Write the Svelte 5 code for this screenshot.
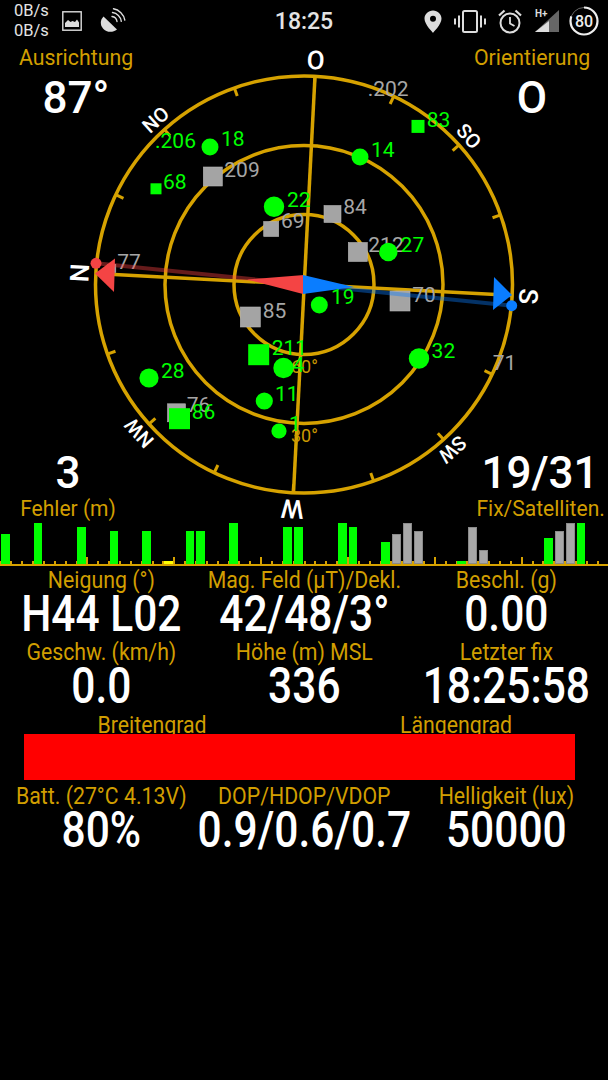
<script>
  const cx = 304;
  const cy = 284.5;
  const tilt = 3;

  const ticks = Array.from({ length: 16 }, (_, i) => tilt + i * 22.5);

  const compass = [
    { t: "N", a: -87, r: 225, fs: 26 },
    { t: "NO", a: -42, r: 222, fs: 20 },
    { t: "O", a: 3, r: 225, fs: 26 },
    { t: "SO", a: 48, r: 222, fs: 20 },
    { t: "S", a: 93, r: 225, fs: 26 },
    { t: "SW", a: 138, r: 222, fs: 20 },
    { t: "W", a: 183, r: 225, fs: 26 },
    { t: "NW", a: 228, r: 222, fs: 20 },
  ];

  // x, y = marker centre, s = square size
  const greySats = [
    { n: "209", x: 212.8, y: 176.5, s: 19, tx: 224.3, ty: 177 },
    { n: "69", x: 271.2, y: 229, s: 15, tx: 281, ty: 228 },
    { n: "84", x: 332.5, y: 214, s: 17, tx: 343.3, ty: 213.5 },
    { n: "212", x: 357.8, y: 252, s: 19, tx: 368.3, ty: 252 },
    { n: "77", x: 111.8, y: 268.5, s: 8, tx: 117.3, ty: 268.5 },
    { n: "85", x: 250.3, y: 317, s: 20, tx: 262.7, ty: 317.5 },
    { n: "76", x: 176.5, y: 412.8, s: 18, tx: 186.7, ty: 412 },
    { n: "70", x: 400, y: 301, s: 20, tx: 412.3, ty: 302 },
    { n: ".202", tx: 367.7, ty: 96 },
    { n: "71", tx: 492.7, ty: 370 },
  ];

  const greenSats = [
    { n: ".206", tx: 155, ty: 147.7 },
    { n: "18", x: 210, y: 147, r: 8.5, tx: 221, ty: 146 },
    { n: "22", x: 274, y: 206.7, r: 10.2, tx: 287, ty: 207 },
    { n: "14", x: 360, y: 157, r: 8.5, tx: 371, ty: 157 },
    { n: "27", x: 388.3, y: 252, r: 9.2, tx: 400.6, ty: 252 },
    { n: "19", x: 319.3, y: 305, r: 8.5, tx: 331, ty: 304 },
    { n: "32", x: 419, y: 358.5, r: 10.2, tx: 431.6, ty: 358 },
    { n: "28", x: 149, y: 378, r: 9.6, tx: 161, ty: 378 },
    { n: "11", x: 264.3, y: 401, r: 8.6, tx: 275, ty: 401 },
    { n: "1", x: 279, y: 431, r: 7.6, tx: 289, ty: 431 },
    { n: "4", x: 283.5, y: 368, r: 10.2, tx: 292.5, ty: 372 },
    { n: "83", x: 418, y: 126.4, s: 13, tx: 426.7, ty: 126.7 },
    { n: "68", x: 156, y: 188.8, s: 11, tx: 163, ty: 189 },
    { n: "211", x: 258.7, y: 354.7, s: 21, tx: 271.7, ty: 355 },
    { n: "86", x: 179.5, y: 418.7, s: 21, tx: 191.7, ty: 419 },
  ];

  const G = "green";
  const A = "grey";
  const Y = "yellow";
  const barData = {
    0: [30, G], 3: [41, G], 7: [37, G], 10: [33, G], 13: [33, G], 15: [3, Y],
    17: [33, G], 18: [33, G], 21: [41, G], 26: [37, G], 27: [37, G], 31: [41, G],
    32: [37, G], 35: [22, G], 36: [30, A], 37: [41, A], 38: [33, A], 42: [3, G],
    43: [37, A], 44: [14, A], 50: [26, G], 51: [33, A], 52: [41, A], 53: [41, G],
  };
  const slots = Array.from({ length: 56 }, (_, i) => barData[i] ?? null);

  const rowA = [
    ["Neigung (°)", "H44 L02"],
    ["Mag. Feld (µT)/Dekl.", "42/48/3°"],
    ["Beschl. (g)", "0.00"],
  ];
  const rowB = [
    ["Geschw. (km/h)", "0.0"],
    ["Höhe (m) MSL", "336"],
    ["Letzter fix", "18:25:58"],
  ];
  const rowC = [
    ["Batt. (27°C 4.13V)", "80%"],
    ["DOP/HDOP/VDOP", "0.9/0.6/0.7"],
    ["Helligkeit (lux)", "50000"],
  ];
</script>

<div class="page">
  <header class="status">
    <div class="status-left">
      <div class="speed"><span>0B/s</span><span>0B/s</span></div>
      <svg class="ic" width="20" height="20" viewBox="0 0 20 20">
        <rect x="0.8" y="0.8" width="18.4" height="18.4" fill="none" stroke="#ddd" stroke-width="1.4" />
        <path d="M3 16V12l3-3 2.5 2 2-1 2.5 1 2-2.5 2 3V16Z" fill="#ddd" />
      </svg>
      <svg class="ic dish" width="28" height="28" viewBox="0 0 28 28">
        <path d="M4.5 9.5 18 22.5C13.5 26 7.5 25.5 4 21.5 1 18 1 13 4.5 9.5Z" fill="#ddd" />
        <g fill="none" stroke="#ddd" stroke-width="1.4" stroke-linecap="round">
          <path d="M13 9.5c2.5.3 4.7 2.5 5 5" />
          <path d="M13.5 5.5c4.5.5 8.3 4.3 8.8 8.8" />
          <path d="M14.5 1.8c5.5.8 10.5 5.700 11.3 11.3" />
        </g>
      </svg>
    </div>
    <div class="clock">18:25</div>
    <div class="status-right">
      <svg width="18" height="23" viewBox="0 0 18 23">
        <path fill-rule="evenodd" d="M9 .5C4.2 .5.5 4.2.5 8.800c0 5.700 8.500 14 8.500 14s8.500-8.300 8.500-14C17.500 4.200 13.800.5 9 .5Zm0 11.300a3 3 0 1 1 0-6 3 3 0 0 1 0 6Z" fill="#ddd" />
      </svg>
      <svg width="32" height="23" viewBox="0 0 32 23">
        <rect x="9" y="1" width="14" height="21" rx="1.500" fill="none" stroke="#ddd" stroke-width="2" />
        <path d="M5 5.500v12M1 8.500v6M27 5.500v12M31 8.500v6" stroke="#ddd" stroke-width="2" />
      </svg>
      <svg width="24" height="25" viewBox="0 0 24 25">
        <circle cx="12" cy="14" r="9.500" fill="none" stroke="#ddd" stroke-width="2" />
        <path d="M12 8v6.500l4.500 2.500" fill="none" stroke="#ddd" stroke-width="1.800" />
        <path d="M1 6.500 6.500 1.500M23 6.500 17.500 1.500" stroke="#ddd" stroke-width="2.200" />
      </svg>
      <svg class="signal" width="25" height="24" viewBox="0 0 25 24">
        <path d="M24 1V23H0Z" fill="#666" />
        <path d="M14 12V23H0Z" fill="#ddd" />
        <text class="hplus" x="0" y="8">H+</text>
      </svg>
      <svg class="ringwrap" width="30" height="30" viewBox="0 0 30 30">
        <circle cx="15" cy="15" r="13.500" fill="none" stroke="#666" stroke-width="1" />
        <circle cx="15" cy="15" r="13.500" fill="none" stroke="#eee" stroke-width="2.200"
          stroke-dasharray="67.900 84.800" transform="rotate(-90 15 15)" />
        <text class="ring" x="15" y="20.500" text-anchor="middle">80</text>
      </svg>
    </div>
  </header>

  <section class="radar">
    <svg class="plot" width="608" height="480" viewBox="0 42 608 480">
      <g class="gold">
        <circle cx={cx} cy={cy} r="208.500" />
        <circle cx={cx} cy={cy} r="139" />
        <circle cx={cx} cy={cy} r="70" />
        <line x1="315" y1="76" x2="293.500" y2="492.500" />
        <line x1="95.500" y1="273.500" x2="512.500" y2="295.500" />
        {#each ticks as a}
          <line class="tick" x1={cx} y1={cy - 208} x2={cx} y2={cy - 200} transform="rotate({a} {cx} {cy})" />
        {/each}
      </g>
      <text class="elev" x="291" y="373">60°</text>
      <text class="elev" x="291" y="442">30°</text>

      {#each greySats as s}
        {#if s.s}
          <rect class="sq-grey" x={s.x - s.s / 2} y={s.y - s.s / 2} width={s.s} height={s.s} />
        {/if}
        <text class="sat grey" x={s.tx} y={s.ty}>{s.n}</text>
      {/each}

      <line x1="96" y1="263.300" x2={cx} y2={cy} stroke="#ff4444" stroke-opacity="0.4" stroke-width="4" />
      <line x1="511.700" y1="305.700" x2={cx} y2={cy} stroke="#0a7dff" stroke-opacity="0.4" stroke-width="4" />
      <polygon points="304,275 303,294 247,279.500" fill="#f44444" />
      <polygon points="303,275 303,294 354,287" fill="#0a7dff" />
      <polygon points="95,273.500 115,258.500 114,292" fill="#f44444" />
      <polygon points="512,295 494,277 493,310" fill="#0a7dff" />
      <circle cx="96" cy="263.300" r="5.500" fill="#f44444" />
      <circle cx="511.700" cy="305.700" r="5.500" fill="#0a7dff" />

      {#each greenSats as s}
        {#if s.r}
          <circle class="mark" cx={s.x} cy={s.y} r={s.r} />
        {:else if s.s}
          <rect class="mark" x={s.x - s.s / 2} y={s.y - s.s / 2} width={s.s} height={s.s} />
        {/if}
        <text class="sat green" x={s.tx} y={s.ty}>{s.n}</text>
      {/each}

      {#each compass as c}
        <g transform="translate({cx} {cy}) rotate({c.a}) translate(0 {-c.r})">
          <text class="card" y={c.fs * 0.36} font-size={c.fs} text-anchor="middle">{c.t}</text>
        </g>
      {/each}
    </svg>

    <div class="corners top">
      <div class="corner wide">
        <div class="lbl">Ausrichtung</div>
        <div class="val">87°</div>
      </div>
      <div class="corner wide">
        <div class="lbl">Orientierung</div>
        <div class="val">O</div>
      </div>
    </div>
    <div class="corners bottom">
      <div class="corner narrow">
        <div class="val">3</div>
        <div class="lbl">Fehler (m)</div>
      </div>
      <div class="corner narrow">
        <div class="val">19/31</div>
        <div class="lbl">Fix/Satelliten.</div>
      </div>
    </div>
  </section>

  <div class="chart">
    {#each slots as b, i}
      <div class="slot" class:major={i % 8 === 0 && i > 0}>
        {#if b}
          <div class="bar {b[1]}" style="height: {b[0]}px"></div>
        {/if}
      </div>
    {/each}
  </div>

  <div class="readings">
    {#each rowA as [l, v]}
      <div class="cell"><div class="lbl">{l}</div><div class="val">{v}</div></div>
    {/each}
    {#each rowB as [l, v]}
      <div class="cell"><div class="lbl">{l}</div><div class="val">{v}</div></div>
    {/each}
  </div>

  <div class="coords">
    <div class="coord-labels">
      <div class="lbl">Breitengrad</div>
      <div class="lbl">Längengrad</div>
    </div>
    <div class="nofix"></div>
  </div>

  <div class="readings">
    {#each rowC as [l, v]}
      <div class="cell"><div class="lbl">{l}</div><div class="val">{v}</div></div>
    {/each}
  </div>
</div>

<style>
  :global(body) {
    margin: 0;
    background: #000;
  }

  .page {
    width: 608px;
    height: 1080px;
    background: #000;
    font-family: Roboto, "Liberation Sans", sans-serif;
    overflow: hidden;
  }

  .status {
    height: 42px;
    display: grid;
    grid-template-columns: minmax(0, 1fr) auto minmax(0, 1fr);
    align-items: center;
    color: #e4e4e4;
  }

  .status-left {
    display: flex;
    align-items: center;
    padding-left: 14px;
  }

  .speed {
    display: flex;
    flex-direction: column;
    font-size: 16.5px;
    line-height: 20px;
    width: 48px;
  }

  .ic {
    display: block;
  }

  .dish {
    margin-left: 17px;
  }

  .clock {
    font-size: 23px;
    font-weight: 500;
  }

  .status-right {
    display: flex;
    align-items: center;
    justify-content: flex-end;
    gap: 12px;
    padding-right: 9px;
  }

  .signal {
    margin-left: 1px;
  }

  .ringwrap {
    margin-left: -3px;
  }

  .hplus {
    font-size: 10px;
    font-weight: 700;
    fill: #ddd;
  }

  .ring {
    font-size: 16px;
    font-weight: 500;
    fill: #eee;
  }

  .radar {
    position: relative;
    height: 480px;
  }

  .plot {
    position: absolute;
    top: 0;
    left: 0;
  }

  .gold circle,
  .gold line {
    fill: none;
    stroke: #d6a200;
    stroke-width: 3.5;
  }

  .gold line.tick {
    stroke-width: 3;
  }

  .elev {
    font-size: 18px;
    fill: #cc9900;
  }

  .sat {
    font-size: 21px;
  }

  .sat.grey {
    fill: #a6a6a6;
  }

  .sat.green {
    fill: #00ff00;
  }

  .sq-grey {
    fill: #a4a4a4;
    stroke: #b4b4b4;
    stroke-width: 0.6;
  }

  .mark {
    fill: #00ff00;
  }

  .card {
    fill: #fff;
    font-weight: 500;
  }

  .corners {
    position: relative;
    display: flex;
    justify-content: space-between;
  }

  .corners.top {
    padding-top: 3px;
    height: 406px;
    box-sizing: border-box;
  }

  .corner {
    text-align: center;
  }

  .wide {
    width: 152px;
  }

  .narrow {
    width: 136px;
  }

  .lbl {
    color: #d19e00;
    font-size: 21.3px;
    line-height: 26px;
    white-space: nowrap;
  }

  .val {
    color: #fff;
    font-weight: 500;
    white-space: nowrap;
  }

  .corner .val {
    font-size: 44px;
    line-height: 54px;
  }

  .corners.bottom .val {
    line-height: 50px;
  }

  .corners.bottom .lbl {
    font-size: 22.5px;
    line-height: 20px;
    transform: scaleX(0.935);
  }

  .chart {
    display: flex;
    align-items: flex-end;
    height: 42px;
    border-bottom: 2px solid #d6a200;
  }

  .slot {
    position: relative;
    flex: 1;
    box-sizing: border-box;
    padding: 0 1px;
    display: flex;
    align-items: flex-end;
    height: 100%;
  }

  .slot::before {
    content: "";
    position: absolute;
    left: -0.5px;
    bottom: 0;
    width: 2px;
    height: 3px;
    background: #d6a200;
  }

  .slot.major::before {
    height: 7px;
  }

  .bar {
    position: relative;
    width: 100%;
    box-sizing: border-box;
  }

  .bar.green {
    background: #00ff00;
  }

  .bar.yellow {
    background: #ffff00;
  }

  .bar.grey {
    background: #a8a8a8;
    border: 1px solid #8a8a8a;
  }

  .readings {
    display: grid;
    grid-template-columns: repeat(3, minmax(0, 1fr));
    text-align: center;
  }

  /* the app squeezes these readings sideways to fit the cell */
  .cell {
    padding-bottom: 4px;
  }

  .cell .lbl,
  .coord-labels .lbl {
    font-size: 23.4px;
    transform: scaleX(0.91);
  }

  .cell .lbl {
    display: flex;
    justify-content: center;
    line-height: 28px;
  }

  .cell .val {
    display: flex;
    justify-content: center;
    font-size: 50px;
    line-height: 40px;
    transform: scaleX(0.85);
  }

  .coords {
    height: 72px;
  }

  .coord-labels {
    display: grid;
    grid-template-columns: 1fr 1fr;
    text-align: center;
    height: 22px;
    padding-top: 2px;
  }

  .nofix {
    position: relative;
    height: 46px;
    margin: 0 33px 0 24px;
    background: #ff0000;
  }
</style>
